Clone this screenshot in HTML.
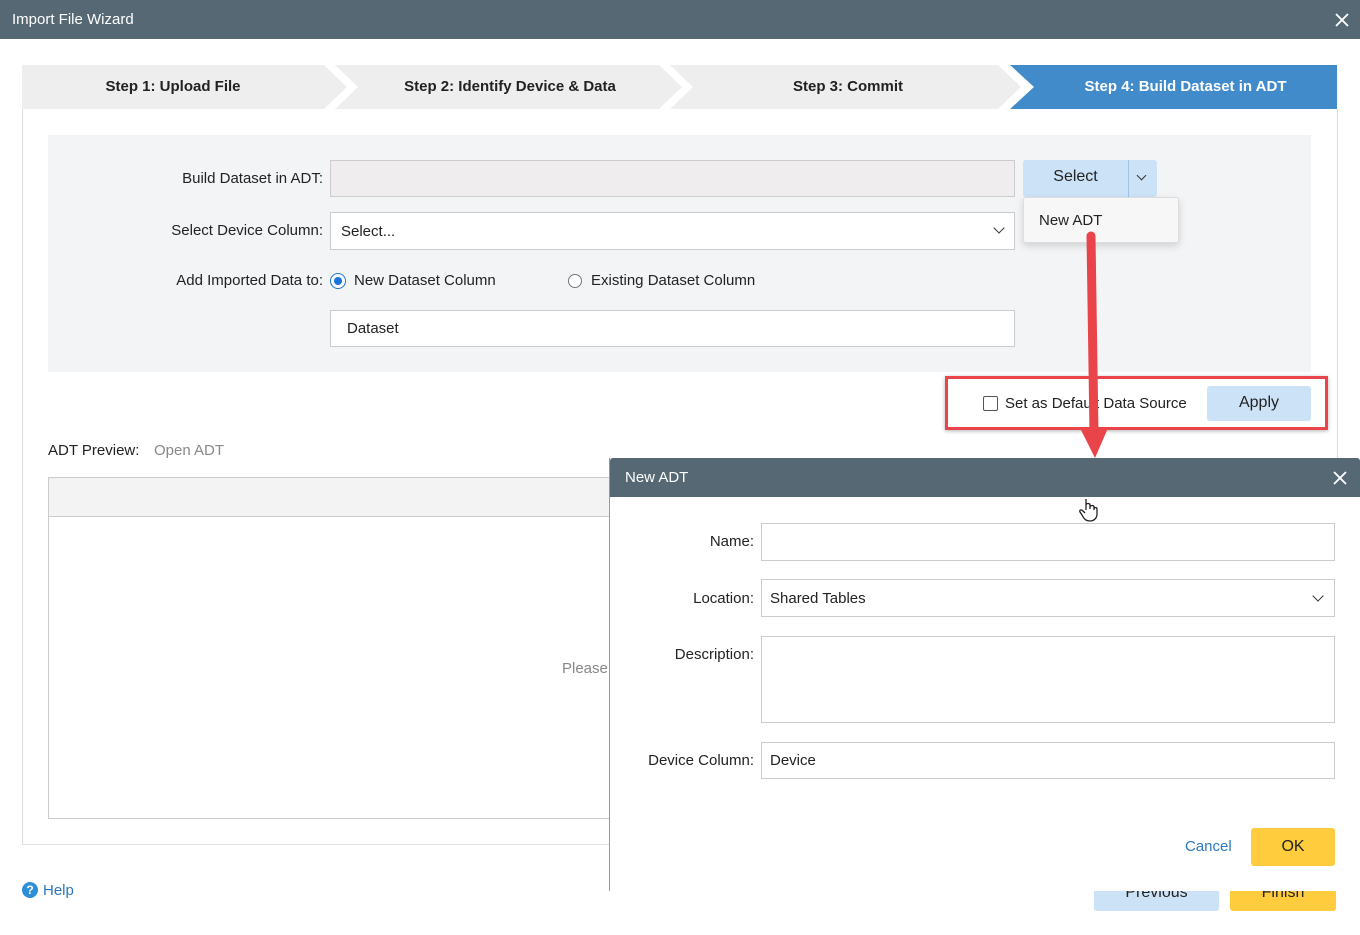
<!DOCTYPE html>
<html><head><meta charset="utf-8"><style>
*{box-sizing:border-box;margin:0;padding:0}
body{width:1360px;height:935px;position:relative;background:#fff;font-family:"Liberation Sans",sans-serif;font-size:15px;color:#222;overflow:hidden}
.a{position:absolute}
.lbl{position:absolute;text-align:right;font-size:15px;color:#222}
.inp{position:absolute;border:1px solid #ccc;background:#fff;font-size:15px;padding-left:10px;display:flex;align-items:center}
.chev{position:absolute;width:8px;height:8px;border-right:1.6px solid #333;border-bottom:1.6px solid #333;transform:rotate(45deg)}
</style></head><body>
<div class="a" style="left:0;top:0;width:1360px;height:39px;background:#566874;color:#fff;font-size:15px;padding:11px 0 0 12px">Import File Wizard</div>
<svg class="a" style="left:1334px;top:12px" width="16" height="16"><path d="M2 2L14 14M14 2L2 14" stroke="#fff" stroke-width="1.8"/></svg>

<svg class="a" style="left:0;top:65px" width="1360" height="45">
<polygon points="22,0 324,0 347,22 324,44 22,44" fill="#eeeeee"/>
<polygon points="335,0 659,0 682,22 659,44 335,44 358,22" fill="#eeeeee"/>
<polygon points="670,0 998,0 1021,22 998,44 670,44 693,22" fill="#eeeeee"/>
<polygon points="1010,0 1337,0 1337,44 1010,44 1034,22" fill="#418bcb"/>
</svg>
<div class="a" style="left:22px;top:78px;width:302px;text-align:center;font-weight:bold;font-size:15px">Step 1: Upload File</div>
<div class="a" style="left:345px;top:78px;width:330px;text-align:center;font-weight:bold;font-size:15px">Step 2: Identify Device &amp; Data</div>
<div class="a" style="left:683px;top:78px;width:330px;text-align:center;font-weight:bold;font-size:15px">Step 3: Commit</div>
<div class="a" style="left:1034px;top:78px;width:303px;text-align:center;font-weight:bold;font-size:15px;color:#fff">Step 4: Build Dataset in ADT</div>

<div class="a" style="left:22px;top:109px;width:1316px;height:736px;border:1px solid #ddd;border-top:none"></div>
<div class="a" style="left:48px;top:135px;width:1263px;height:237px;background:#f3f4f6"></div>

<div class="lbl" style="left:60px;top:170px;width:263px">Build Dataset in ADT:</div>
<div class="inp" style="left:330px;top:160px;width:685px;height:37px;background:#efeded"></div>
<div class="a" style="left:1023px;top:160px;width:134px;height:37px;background:#cce2f7;border-radius:3px"></div>
<div class="a" style="left:1023px;top:168px;width:105px;text-align:center;font-size:16px">Select</div>
<div class="a" style="left:1128px;top:160px;width:1px;height:37px;background:#9dc3e8"></div>
<div class="chev" style="left:1138px;top:172px;width:7px;height:7px"></div>
<div class="a" style="left:1023px;top:197px;width:156px;height:46px;background:#f7f7f7;border:1px solid #ddd;border-radius:3px;box-shadow:0 3px 8px rgba(0,0,0,.15);padding:14px 0 0 15px">New ADT</div>

<div class="lbl" style="left:60px;top:222px;width:263px">Select Device Column:</div>
<div class="inp" style="left:330px;top:212px;width:685px;height:38px">Select...</div>
<div class="chev" style="left:995px;top:224px"></div>

<div class="lbl" style="left:60px;top:272px;width:263px">Add Imported Data to:</div>
<div class="a" style="left:330px;top:273px;width:16px;height:16px;border-radius:50%;border:1.5px solid #1a73d9;background:#fff"></div>
<div class="a" style="left:334px;top:277px;width:8px;height:8px;border-radius:50%;background:#1a73d9"></div>
<div class="a" style="left:354px;top:272px">New Dataset Column</div>
<div class="a" style="left:568px;top:274px;width:14px;height:14px;border-radius:50%;border:1px solid #777;background:#fff"></div>
<div class="a" style="left:591px;top:272px">Existing Dataset Column</div>
<div class="inp" style="left:330px;top:310px;width:685px;height:37px;padding-left:16px">Dataset</div>

<div class="a" style="left:983px;top:396px;width:15px;height:15px;border:1px solid #555;border-radius:2px;background:#fff"></div>
<div class="a" style="left:1005px;top:395px">Set as Default Data Source</div>
<div class="a" style="left:1207px;top:386px;width:104px;height:35px;background:#cce2f7;border-radius:3px;text-align:center;padding-top:8px;font-size:16px">Apply</div>
<div class="a" style="left:945px;top:376px;width:383px;height:54px;border:3px solid #e8444a;box-shadow:0 1px 4px rgba(0,0,0,.3)"></div>

<div class="a" style="left:48px;top:442px">ADT Preview:</div>
<div class="a" style="left:154px;top:442px;color:#888">Open ADT</div>
<div class="a" style="left:48px;top:477px;width:580px;height:342px;border:1px solid #ccc"></div>
<div class="a" style="left:49px;top:478px;width:579px;height:39px;background:#f3f3f3;border-bottom:1px solid #ccc"></div>
<div class="a" style="left:562px;top:660px;color:#888">Please</div>

<div class="a" style="left:22px;top:882px;width:16px;height:16px;border-radius:50%;background:#2c8fd8;color:#fff;font-size:12px;font-weight:bold;text-align:center;line-height:16px">?</div>
<div class="a" style="left:43px;top:882px;color:#2b78c2">Help</div>
<div class="a" style="left:1094px;top:880px;width:125px;height:31px;background:#cce2f7;border-radius:3px;text-align:center;padding-top:4px;font-size:16px">Previous</div>
<div class="a" style="left:1230px;top:880px;width:106px;height:31px;background:#ffcc3e;border-radius:3px;text-align:center;padding-top:4px;font-size:16px">Finish</div>

<!-- New ADT dialog -->
<div class="a" style="left:609px;top:458px;width:751px;height:433px;background:#fff;border-left:1px solid #999"></div>
<div class="a" style="left:610px;top:458px;width:750px;height:39px;background:#566874;color:#fff;padding:11px 0 0 15px;border-radius:3px 3px 0 0">New ADT</div>
<svg class="a" style="left:1333px;top:471px" width="14" height="14"><path d="M1 1L13 13M13 1L1 13" stroke="#fff" stroke-width="1.8"/></svg>
<div class="lbl" style="left:620px;top:533px;width:134px">Name:</div>
<div class="inp" style="left:761px;top:523px;width:574px;height:38px"></div>
<div class="lbl" style="left:620px;top:590px;width:134px">Location:</div>
<div class="inp" style="left:761px;top:579px;width:574px;height:38px;padding-left:8px">Shared Tables</div>
<div class="chev" style="left:1314px;top:592px"></div>
<div class="lbl" style="left:620px;top:646px;width:134px">Description:</div>
<div class="inp" style="left:761px;top:636px;width:574px;height:87px"></div>
<div class="lbl" style="left:620px;top:752px;width:134px">Device Column:</div>
<div class="inp" style="left:761px;top:742px;width:574px;height:37px;padding-left:8px">Device</div>
<div class="a" style="left:1185px;top:838px;color:#2b78c2">Cancel</div>
<div class="a" style="left:1251px;top:828px;width:84px;height:38px;background:#ffcc3e;border-radius:3px;text-align:center;padding-top:10px;font-size:16px">OK</div>

<!-- arrow -->
<svg class="a" style="left:1070px;top:228px" width="50" height="235">
<path d="M21 8 L24 205" stroke="#e8444a" stroke-width="9" stroke-linecap="round" fill="none"/>
<polygon points="10,200 38,200 25,230" fill="#e8444a"/>
</svg>
<svg class="a" style="left:1078px;top:497px" width="22" height="26"><path d="M8 2v11M8 8c0-2 4-2 4 0v4M12 10c0-2 4-2 4 0v3M16 12c0-2 3-2 3 0v5c0 4-3 7-7 7s-6-2-8-6l-2-3c-1-2 1-3 3-1l2 2" stroke="#222" stroke-width="1.3" fill="#fff"/></svg>
</body></html>
